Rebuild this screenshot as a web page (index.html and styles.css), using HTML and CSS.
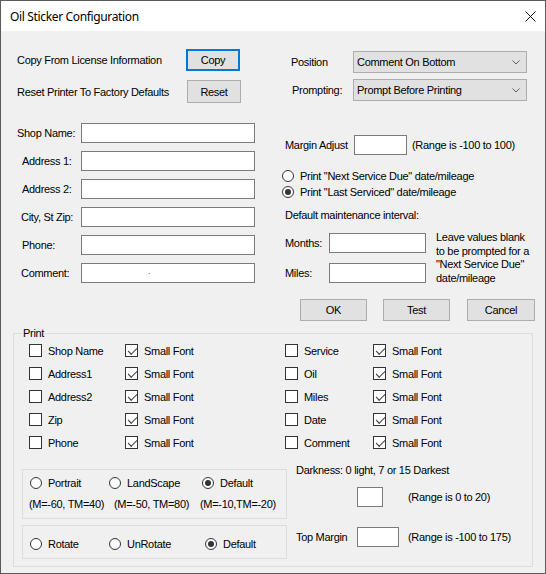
FILE: index.html
```html
<!DOCTYPE html>
<html>
<head>
<meta charset="utf-8">
<title>Oil Sticker Configuration</title>
<link rel="stylesheet" href="styles.css">
</head>
<body>
<div class="window">
  <div class="titlebar">
    <span class="title">Oil Sticker Configuration</span>
    <svg class="close" width="11" height="11" viewBox="0 0 11 11"><path d="M0.5 0.5 L10.5 10.5 M10.5 0.5 L0.5 10.5" stroke="#111" stroke-width="1" fill="none"/></svg>
  </div>
  <div class="client">
    <div class="top">
      <div class="left">
        <div class="row r-copy"><span class="lbl-copy">Copy From License Information</span><button class="btn btn-focus btn-copy">Copy</button></div>
        <div class="row r-reset"><span class="lbl-reset">Reset Printer To Factory Defaults</span><button class="btn btn-reset">Reset</button></div>
        <div class="fields">
          <div class="field"><span class="flbl">Shop Name:</span><div class="tb tb-wide"></div></div>
          <div class="field"><span class="flbl pad5">Address 1:</span><div class="tb tb-wide"></div></div>
          <div class="field"><span class="flbl pad5">Address 2:</span><div class="tb tb-wide"></div></div>
          <div class="field"><span class="flbl pad4">City, St Zip:</span><div class="tb tb-wide"></div></div>
          <div class="field"><span class="flbl pad5">Phone:</span><div class="tb tb-wide"></div></div>
          <div class="field"><span class="flbl pad4">Comment:</span><div class="tb tb-wide tb-comment"><span class="dot">.</span></div></div>
        </div>
      </div>
      <div class="right">
        <div class="row combo-row r-pos"><span class="clbl">Position</span><div class="combo"><span>Comment On Bottom</span><svg class="chev" width="8" height="5" viewBox="0 0 8 5"><path d="M0.5 0.5 L4 4 L7.5 0.5" stroke="#606060" fill="none"/></svg></div></div>
        <div class="row combo-row r-prompt"><span class="clbl">Prompting:</span><div class="combo"><span>Prompt Before Printing</span><svg class="chev" width="8" height="5" viewBox="0 0 8 5"><path d="M0.5 0.5 L4 4 L7.5 0.5" stroke="#606060" fill="none"/></svg></div></div>
        <div class="row r-margin"><span class="mlbl">Margin Adjust</span><div class="tb tb-margin"></div><span class="range">(Range is -100 to 100)</span></div>
        <div class="radios">
          <div class="radio-row"><span class="radio"></span><span class="rlbl">Print "Next Service Due" date/mileage</span></div>
          <div class="radio-row"><span class="radio checked"></span><span class="rlbl">Print "Last Serviced" date/mileage</span></div>
        </div>
        <div class="interval-lbl">Default maintenance interval:</div>
        <div class="interval">
          <div class="int-fields">
            <div class="row int-row"><span class="ilbl">Months:</span><div class="tb tb-int"></div></div>
            <div class="row int-row int-miles"><span class="ilbl">Miles:</span><div class="tb tb-int"></div></div>
          </div>
          <div class="note">Leave values blank<br>to be prompted for a<br>"Next Service Due"<br>date/mileage</div>
        </div>
        <div class="buttons">
          <button class="btn btn-dlg">OK</button>
          <button class="btn btn-dlg btn-test">Test</button>
          <button class="btn btn-dlg btn-cancel">Cancel</button>
        </div>
      </div>
    </div>
    <fieldset class="print">
      <legend>Print</legend>
      <div class="checks">
        <div class="chk"><span class="box"></span><span>Shop Name</span></div>
        <div class="chk"><span class="box on"></span><span>Small Font</span></div>
        <div class="chk"><span class="box"></span><span>Service</span></div>
        <div class="chk"><span class="box on"></span><span>Small Font</span></div>

        <div class="chk"><span class="box"></span><span>Address1</span></div>
        <div class="chk"><span class="box on"></span><span>Small Font</span></div>
        <div class="chk"><span class="box"></span><span>Oil</span></div>
        <div class="chk"><span class="box on"></span><span>Small Font</span></div>

        <div class="chk"><span class="box"></span><span>Address2</span></div>
        <div class="chk"><span class="box on"></span><span>Small Font</span></div>
        <div class="chk"><span class="box"></span><span>Miles</span></div>
        <div class="chk"><span class="box on"></span><span>Small Font</span></div>

        <div class="chk"><span class="box"></span><span>Zip</span></div>
        <div class="chk"><span class="box on"></span><span>Small Font</span></div>
        <div class="chk"><span class="box"></span><span>Date</span></div>
        <div class="chk"><span class="box on"></span><span>Small Font</span></div>

        <div class="chk"><span class="box"></span><span>Phone</span></div>
        <div class="chk"><span class="box on"></span><span>Small Font</span></div>
        <div class="chk"><span class="box"></span><span>Comment</span></div>
        <div class="chk"><span class="box on"></span><span>Small Font</span></div>
      </div>
      <div class="bottom">
        <div class="groups">
          <div class="grp grp-orient">
            <div class="grow">
              <div class="ritem w79"><span class="radio"></span><span class="rlbl">Portrait</span></div>
              <div class="ritem w93"><span class="radio"></span><span class="rlbl">LandScape</span></div>
              <div class="ritem"><span class="radio checked"></span><span class="rlbl">Default</span></div>
            </div>
            <div class="grow caps">
              <span class="cap w85">(M=-60, TM=40)</span>
              <span class="cap w86">(M=-50, TM=80)</span>
              <span class="cap">(M=-10,TM=-20)</span>
            </div>
          </div>
          <div class="grp grp-rot">
            <div class="grow">
              <div class="ritem w79"><span class="radio"></span><span class="rlbl">Rotate</span></div>
              <div class="ritem w96"><span class="radio"></span><span class="rlbl">UnRotate</span></div>
              <div class="ritem"><span class="radio checked"></span><span class="rlbl">Default</span></div>
            </div>
          </div>
        </div>
        <div class="dark">
          <div class="dark-lbl">Darkness: 0 light, 7 or 15 Darkest</div>
          <div class="row dark-row"><div class="tb tb-dark"></div><span class="range">(Range is 0 to 20)</span></div>
          <div class="row top-row"><span class="tlbl">Top Margin</span><div class="tb tb-top"></div><span class="range range-top">(Range is -100 to 175)</span></div>
        </div>
      </div>
    </fieldset>
  </div>
</div>
</body>
</html>
```

FILE: styles.css
```css
* { box-sizing: border-box; }
html, body { margin: 0; padding: 0; }
body {
  font-family: "Liberation Sans", Arial, sans-serif;
  font-size: 11px;
  letter-spacing: -0.3px;
  color: #000;
  background: #fff;
}
.window {
  width: 546px;
  height: 574px;
  border: 1px solid #5a5a5a;
  background: #f0f0f0;
  display: flex;
  flex-direction: column;
  overflow: hidden;
}
.titlebar {
  height: 30px;
  flex: none;
  background: #fff;
  display: flex;
  align-items: center;
  padding-left: 9px;
}
.title {
  font-family: "Noto Sans", "Liberation Sans", sans-serif;
  font-size: 12px;
  letter-spacing: -0.35px;
  color: #000;
}
.close { margin-left: auto; margin-right: 9px; margin-top: 1px; }
.client { flex: 1; display: flex; flex-direction: column; }
.top { display: flex; }
.left { width: 272px; padding-left: 16px; flex: none; }
.right { flex: 1; }
.row { display: flex; align-items: center; }

.btn {
  font-family: inherit;
  font-size: 11px;
  letter-spacing: -0.3px;
  color: #000;
  background: #e1e1e1;
  border: 1px solid #adadad;
  padding: 0;
  margin: 0;
  height: 22px;
  text-align: center;
}
.btn-focus { border: 2px solid #0078d7; }
.r-copy { margin-top: 18px; height: 22px; }
.lbl-copy { width: 169px; }
.btn-copy { width: 54px; height: 22px; }
.r-reset { margin-top: 9px; height: 23px; }
.lbl-reset { width: 170px; }
.btn-reset { width: 54px; height: 23px; }

.tb { background: #fff; border: 1px solid #7a7a7a; height: 20px; }
.fields { margin-top: 20px; display: flex; flex-direction: column; gap: 8px; }
.field { display: flex; align-items: center; height: 20px; }
.flbl { width: 64px; flex: none; }
.pad5 { padding-left: 5px; }
.pad4 { padding-left: 4px; }
.tb-wide { width: 174px; }
.dot { display: block; padding-left: 66px; line-height: 14px; color: #444; font-size: 9px; }

.combo-row { height: 22px; }
.r-pos { margin-top: 20px; padding-left: 18px; }
.r-pos .clbl { width: 62px; }
.r-prompt { margin-top: 6px; padding-left: 19px; }
.r-prompt .clbl { width: 61px; }
.combo {
  width: 174px;
  height: 22px;
  background: #e1e1e1;
  border: 1px solid #adadad;
  display: flex;
  align-items: center;
  padding-left: 3px;
  padding-right: 6px;
}
.chev { margin-left: auto; }

.r-margin { margin-top: 34px; padding-left: 12px; height: 20px; }
.mlbl { width: 69px; }
.tb-margin { width: 53px; }
.range { margin-left: 5px; }

.radios { margin-top: 13px; padding-left: 9px; }
.radio-row { display: flex; align-items: center; height: 16px; }
.radio {
  width: 12px;
  height: 12px;
  border: 1px solid #333;
  border-radius: 50%;
  background: #fff;
  flex: none;
  display: flex;
  align-items: center;
  justify-content: center;
}
.radio.checked::after {
  content: "";
  width: 6px;
  height: 6px;
  border-radius: 50%;
  background: #333;
}
.rlbl { margin-left: 6px; }

.interval-lbl { margin-top: 8px; height: 14px; line-height: 14px; padding-left: 12px; }
.interval { margin-top: 11px; display: flex; }
.int-fields { padding-left: 12px; }
.int-row { height: 20px; }
.int-miles { margin-top: 10px; }
.ilbl { width: 44px; }
.tb-int { width: 97px; }
.note { margin-left: 10px; margin-top: -2px; line-height: 13.5px; }

.buttons { margin-top: 14px; padding-left: 27px; display: flex; }
.btn-dlg { width: 67px; height: 22px; }
.btn-test { margin-left: 16px; }
.btn-cancel { margin-left: 17px; width: 68px; }

.print {
  margin: 6px 12px 0 12px;
  padding: 0 0 7px 8px;
  border: 1px solid #dcdcdc;
  min-width: 0;
}
.print legend {
  margin-left: 0;
  padding: 0 1px;
  line-height: 13px;
  height: 13px;
}
.checks {
  margin-top: -1px;
  margin-left: 7px;
  display: grid;
  grid-template-columns: 96px 160px 88px auto;
  grid-auto-rows: 23px;
}
.chk { display: flex; align-items: center; }
.chk span:last-child { margin-left: 6px; }
.box {
  width: 13px;
  height: 13px;
  border: 1px solid #333;
  background: #fff;
  flex: none;
  position: relative;
}
.box.on::after {
  content: "";
  position: absolute;
  left: 2px;
  top: 1px;
  width: 7px;
  height: 4px;
  border-left: 1px solid #444;
  border-bottom: 1px solid #444;
  transform: translate(0.5px, 1.5px) rotate(-45deg) scaleX(1.1);
  transform-origin: center;
}

.bottom { margin-top: 9px; display: flex; }
.groups { padding-top: 6px; }
.grp { width: 265px; border: 1px solid #dcdcdc; }
.grp-orient { height: 50px; padding: 5px 0 0 7px; }
.grp-rot { height: 34px; margin-top: 6px; padding: 10px 0 0 7px; }
.grow { display: flex; align-items: center; height: 16px; }
.caps { margin-top: 5px; margin-left: -1px; }
.ritem { display: flex; align-items: center; }
.w79 { width: 79px; }
.w93 { width: 93px; }
.w96 { width: 96px; }
.w85 { width: 85px; }
.w86 { width: 86px; }
.ritem .rlbl { margin-left: 6px; }

.dark { margin-left: 9px; }
.dark-lbl { line-height: 14px; height: 14px; }
.dark-row { margin-top: 10px; padding-left: 61px; height: 20px; }
.tb-dark { width: 26px; }
.dark-row .range { margin-left: 25px; }
.top-row { margin-top: 20px; height: 20px; }
.tlbl { width: 61px; }
.tb-top { width: 42px; }
.range-top { margin-left: 9px; }
```
